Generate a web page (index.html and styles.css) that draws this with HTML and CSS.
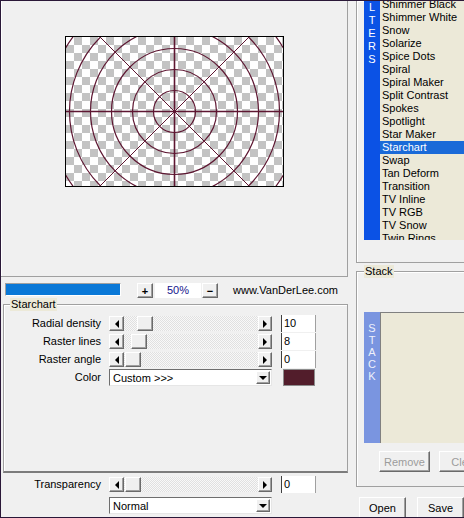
FILE: index.html
```html
<!DOCTYPE html>
<html>
<head>
  <meta charset="UTF-8">
  <title>Starchart</title>
  <link rel="stylesheet" href="styles.css">
</head>
<body>
  <div class="window">
    <div class="left-pane">
      <div class="preview">
        <svg class="preview-canvas" width="217" height="149" viewBox="0 0 217 149">
          <defs>
            <pattern id="checker" width="16" height="16" patternUnits="userSpaceOnUse">
              <rect width="16" height="16" fill="#fff"/>
              <rect x="8" width="8" height="8" fill="#c3c3c3"/>
              <rect y="8" width="8" height="8" fill="#c3c3c3"/>
            </pattern>
          </defs>
          <rect width="217" height="149" fill="url(#checker)"/>
          <g fill="none" stroke="#5e1732">
            <!-- rings, one per radial step -->
            <g stroke-width="1.2">
              <circle cx="108.5" cy="74.5" r="21"/>
              <circle cx="108.5" cy="74.5" r="42"/>
              <circle cx="108.5" cy="74.5" r="63"/>
              <circle cx="108.5" cy="74.5" r="84"/>
              <circle cx="108.5" cy="74.5" r="105"/>
              <circle cx="108.5" cy="74.5" r="126"/>
            </g>
            <!-- raster lines -->
            <path d="M0 74.5H217M108.5 0V149" stroke-width="1.6"/>
            <path d="M34 0L183 149M183 0L34 149" stroke-width="1"/>
          </g>
        </svg>
      </div>

      <div class="zoom-bar">
        <div class="progress"><div class="progress-fill"></div></div>
        <button class="btn small-btn">+</button>
        <div class="zoom-value">50%</div>
        <button class="btn small-btn">&minus;</button>
        <div class="site">www.VanDerLee.com</div>
      </div>

      <fieldset class="group settings">
        <legend>Starchart</legend>
        <div class="rows">
          <label>Radial density</label>
          <div class="slider">
            <span class="btn arrow-btn"><i class="tri tri-left"></i></span>
            <span class="track"><span class="btn thumb" style="margin-left: 13px"></span></span>
            <span class="btn arrow-btn"><i class="tri tri-right"></i></span>
          </div>
          <div class="field">10</div>

          <label>Raster lines</label>
          <div class="slider">
            <span class="btn arrow-btn"><i class="tri tri-left"></i></span>
            <span class="track"><span class="btn thumb" style="margin-left: 7px"></span></span>
            <span class="btn arrow-btn"><i class="tri tri-right"></i></span>
          </div>
          <div class="field">8</div>

          <label>Raster angle</label>
          <div class="slider">
            <span class="btn arrow-btn"><i class="tri tri-left"></i></span>
            <span class="track"><span class="btn thumb" style="margin-left: 1px"></span></span>
            <span class="btn arrow-btn"><i class="tri tri-right"></i></span>
          </div>
          <div class="field">0</div>

          <label>Color</label>
          <div class="dropdown">
            <span class="dropdown-text">Custom &gt;&gt;&gt;</span>
            <span class="btn dropdown-btn"><i class="tri tri-down"></i></span>
          </div>
          <div class="swatch"></div>
        </div>
      </fieldset>

      <div class="rows blend">
        <label>Transparency</label>
        <div class="slider">
          <span class="btn arrow-btn"><i class="tri tri-left"></i></span>
          <span class="track"><span class="btn thumb" style="margin-left: 1px"></span></span>
          <span class="btn arrow-btn"><i class="tri tri-right"></i></span>
        </div>
        <div class="field">0</div>

        <span></span>
        <div class="dropdown">
          <span class="dropdown-text">Normal</span>
          <span class="btn dropdown-btn"><i class="tri tri-down"></i></span>
        </div>
      </div>
    </div>

    <div class="right-pane">
      <div class="group filters">
        <div class="list-box">
          <div class="strip filters-strip">
            <div class="strip-letters">
              <span>F</span><span>I</span><span>L</span><span>T</span><span>E</span><span>R</span><span>S</span>
            </div>
          </div>
          <ul class="list filter-list">
            <li>Shimmer Black</li>
            <li>Shimmer White</li>
            <li>Snow</li>
            <li>Solarize</li>
            <li>Spice Dots</li>
            <li>Spiral</li>
            <li>Spiral Maker</li>
            <li>Split Contrast</li>
            <li>Spokes</li>
            <li>Spotlight</li>
            <li>Star Maker</li>
            <li class="selected">Starchart</li>
            <li>Swap</li>
            <li>Tan Deform</li>
            <li>Transition</li>
            <li>TV Inline</li>
            <li>TV RGB</li>
            <li>TV Snow</li>
            <li>Twin Rings</li>
          </ul>
        </div>
      </div>

      <fieldset class="group stack">
        <legend>Stack</legend>
        <div class="list-box stack-box">
          <div class="strip stack-strip">
            <div class="strip-letters">
              <span>S</span><span>T</span><span>A</span><span>C</span><span>K</span>
            </div>
          </div>
          <div class="list stack-list"></div>
        </div>
        <div class="stack-buttons">
          <button class="btn push-btn" disabled>Remove</button>
          <button class="btn push-btn" disabled>Clear</button>
        </div>
      </fieldset>

      <div class="actions">
        <button class="btn push-btn">Open</button>
        <button class="btn push-btn">Save</button>
      </div>
    </div>
  </div>
</body>
</html>
```

FILE: styles.css
```css
body {
  margin: 0;
  font-family: "Liberation Sans", Arial, sans-serif;
  font-size: 11px;
  color: #000;
  background-color: #f0f0f0;
}

.window {
  display: grid;
  grid-template-columns: 347px 116px;
  height: 518px;
  box-sizing: border-box;
  border-left: 1px solid #2a1838;
  border-top: 1px solid #2a1838;
  border-bottom: 1px solid #2a1838;
  overflow: hidden;
}

/* generic 3d button face */
.btn {
  display: block;
  box-sizing: border-box;
  background-color: #f0f0f0;
  border: 1px solid;
  border-color: #fff #6a6a6a #6a6a6a #fff;
  box-shadow: inset -1px -1px 0 #a0a0a0;
  padding: 0;
  font: inherit;
  color: #000;
}

.tri {
  display: block;
  width: 0;
  height: 0;
}

.tri-left {
  border-top: 4px solid transparent;
  border-bottom: 4px solid transparent;
  border-right: 4px solid #000;
}

.tri-right {
  border-top: 4px solid transparent;
  border-bottom: 4px solid transparent;
  border-left: 4px solid #000;
}

.tri-down {
  border-left: 4px solid transparent;
  border-right: 4px solid transparent;
  border-top: 4px solid #000;
}

/* preview */
.preview {
  height: 276px;
  box-sizing: border-box;
  padding: 35px 0 0 64px;
  border-right: 1px solid #a0a0a0;
  border-bottom: 1px solid #a0a0a0;
  box-shadow: inset 1px 0 0 #fff;
}

.preview-canvas {
  display: block;
  border: 1px solid #000;
}

/* zoom bar */
.zoom-bar {
  display: flex;
  align-items: flex-start;
  height: 21px;
  box-sizing: border-box;
  padding: 6px 0 0 4px;
}

.progress {
  width: 116px;
  height: 13px;
  box-sizing: border-box;
  border: 1px solid;
  border-color: #a0a0a0 #fff #fff #a0a0a0;
}

.progress-fill {
  height: 100%;
  background-color: #0a78d7;
}

.small-btn {
  width: 16px;
  height: 15px;
  line-height: 12px;
  text-align: center;
  font-weight: bold;
}

.zoom-bar .small-btn:first-of-type {
  margin-left: 16px;
}

.zoom-value {
  width: 46px;
  height: 15px;
  margin: 0 1px 0 2px;
  line-height: 14px;
  text-align: center;
  color: #14148c;
  background-color: #fff;
}

.site {
  margin-left: 15px;
  line-height: 14px;
}

/* group boxes */
.group {
  margin: 0;
  padding: 0;
  border: 1px solid #a0a0a0;
  box-shadow: inset 1px 1px 0 #fff;
}

.group legend {
  padding: 0 1px;
  line-height: 13px;
  background-color: #ece9d8;
}

.settings {
  margin-left: 2px;
  height: 175px;
  box-sizing: border-box;
  border-bottom: 2px solid #7c7c7c;
}

.settings legend {
  margin-left: 6px;
}

/* label / control rows */
.rows {
  display: grid;
  grid-template-columns: 97px 163px auto;
  column-gap: 8px;
  row-gap: 1px;
  align-items: center;
  margin-top: 4px;
}

.rows > div,
.rows > label {
  height: 17px;
}

.rows label {
  text-align: right;
  line-height: 17px;
}

.blend {
  padding-left: 3px;
  margin-top: 3px;
  row-gap: 4px;
}

.slider {
  display: flex;
  align-items: center;
}

.arrow-btn {
  display: flex;
  align-items: center;
  justify-content: center;
  width: 15px;
  height: 15px;
}

.slider .arrow-btn:last-child {
  width: 14px;
}

.track {
  flex: 1;
  height: 15px;
  background: repeating-conic-gradient(#f8f8f8 0 25%, #e0e0e0 0 50%) 0 0 / 2px 2px;
}

.thumb {
  width: 16px;
  height: 15px;
}

.field {
  width: 35px;
  box-sizing: border-box;
  margin-left: 1px;
  padding-left: 2px;
  line-height: 17px;
  background-color: #fff;
  border-left: 1px solid #404040;
  border-right: 1px solid #a0a0a0;
}

.dropdown {
  display: flex;
  align-items: center;
  box-sizing: border-box;
  background-color: #fff;
  border: 1px solid;
  border-color: #6e6e6e #e6e6e6 #e6e6e6 #6e6e6e;
  padding-right: 1px;
}

.dropdown-text {
  flex: 1;
  padding-left: 3px;
}

.dropdown-btn {
  display: flex;
  align-items: center;
  justify-content: center;
  width: 14px;
  height: 13px;
}

.swatch {
  width: 32px;
  margin-left: 3px;
  box-sizing: border-box;
  background-color: #521d2b;
  border: 1px solid #8c8c8c;
}

/* right pane */
.right-pane {
  overflow: hidden;
}

.filters {
  width: 140px;
  height: 262px;
  box-sizing: border-box;
  margin-left: 8px;
  padding-left: 7px;
  border-top: none;
  border-right: none;
}

.list-box {
  display: flex;
  height: 239px;
  overflow: hidden;
}

.strip {
  width: 16px;
  flex-shrink: 0;
  color: #fff;
  text-align: center;
}

.strip-letters span {
  display: block;
}

.filters-strip {
  background-color: #0b52e5;
}

.filters-strip .strip-letters {
  margin-top: -26px;
  line-height: 13px;
}

.list {
  flex: 1;
  margin: 0;
  padding: 0;
  list-style: none;
  background-color: #ece9d8;
}

.filter-list {
  margin-top: -3px;
}

.filter-list li {
  line-height: 13px;
  padding-left: 2px;
  white-space: nowrap;
}

.filter-list li.selected {
  background-color: #1a6ad8;
  color: #fff;
}

.stack {
  width: 140px;
  margin: 2px 0 0 8px;
  padding: 0 0 14px 7px;
  box-sizing: border-box;
  border-right: none;
}

.stack-box {
  height: 131px;
  margin-top: 34px;
}

.stack-strip {
  background-color: #7a95e0;
}

.stack-strip .strip-letters {
  padding-top: 10px;
  line-height: 12px;
  color: #eef1fb;
}

.stack-list {
  border-top: 1px solid #808080;
  border-left: 1px solid #808080;
}

.stack-buttons {
  display: flex;
  gap: 9px;
  margin: 8px 0 0 15px;
}

.push-btn {
  width: 51px;
  height: 21px;
  text-align: center;
}

.push-btn:disabled {
  color: #9c9c9c;
}

.actions {
  display: flex;
  gap: 11px;
  margin: 10px 0 0 11px;
}

.actions .push-btn {
  width: 49px;
  height: 22px;
}
```
